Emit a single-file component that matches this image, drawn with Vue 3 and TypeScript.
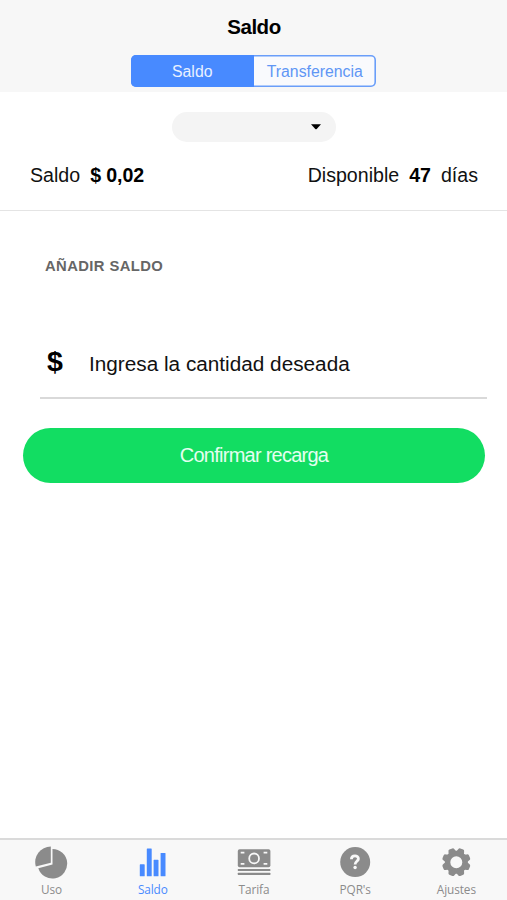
<script setup lang="ts">
import { ref } from 'vue'

type TabId = 'uso' | 'saldo' | 'tarifa' | 'pqrs' | 'ajustes'

interface Tab {
  id: TabId
  label: string
}

const segments: string[] = ['Saldo', 'Transferencia']
const activeSegment = ref<string>('Saldo')

const tabs: Tab[] = [
  { id: 'uso', label: 'Uso' },
  { id: 'saldo', label: 'Saldo' },
  { id: 'tarifa', label: 'Tarifa' },
  { id: 'pqrs', label: "PQR's" },
  { id: 'ajustes', label: 'Ajustes' },
]
const activeTab = ref<TabId>('saldo')

const toothAngles: number[] = [22.5, 67.5, 112.5, 157.5, 202.5, 247.5, 292.5, 337.5]
</script>

<template>
  <div class="screen">
    <header class="header">
      <h1 class="title">Saldo</h1>
      <div class="segmented">
        <button
          v-for="name in segments"
          :key="name"
          type="button"
          class="segment"
          :class="{ active: name === activeSegment }"
          @click="activeSegment = name"
        >{{ name }}</button>
      </div>
    </header>

    <main class="content">
      <div class="picker">
        <svg width="10" height="6" viewBox="0 0 10 6"><path d="M0 .2H10L5.7 4.9Q5 5.6 4.3 4.9Z" fill="#000" /></svg>
      </div>

      <section class="summary">
        <div class="pair"><span>Saldo</span><strong class="amount">$ 0,02</strong></div>
        <div class="pair"><span>Disponible</span><strong>47</strong><span>días</span></div>
      </section>

      <section class="recharge">
        <h2 class="caption">AÑADIR SALDO</h2>
        <div class="field">
          <span class="currency">$</span>
          <span class="placeholder">Ingresa la cantidad deseada</span>
        </div>
        <button type="button" class="confirm">Confirmar recarga</button>
      </section>
    </main>

    <nav class="tabs">
      <button
        v-for="tab in tabs"
        :key="tab.id"
        type="button"
        class="tab"
        :class="{ active: tab.id === activeTab }"
        @click="activeTab = tab.id"
      >
        <svg class="icon" width="34" height="34" viewBox="0 0 34 34" fill="currentColor">
          <template v-if="tab.id === 'uso'">
            <path d="M17.5 2.9A14.8 14.8 0 1 1 3.3 22.2L17.5 18.4Z" />
            <path d="M15.8.5V16.7L.8 20.4A15.6 15.6 0 0 1 15.8.5Z" />
          </template>
          <template v-else-if="tab.id === 'saldo'">
            <rect x="3.8" y="18.3" width="4.9" height="12" rx=".6" />
            <rect x="10.8" y="2.5" width="4.9" height="27.8" rx=".6" />
            <rect x="17.6" y="13.8" width="4.9" height="16.5" rx=".6" />
            <rect x="24.6" y="7" width="4.9" height="23.3" rx=".6" />
          </template>
          <template v-else-if="tab.id === 'tarifa'">
            <rect x=".8" y="3.3" width="32.6" height="18" rx="1.8" />
            <g fill="none" stroke="#f8f8f8" stroke-width="1.8">
              <circle cx="17.1" cy="12.4" r="4.9" />
              <path d="M3.7 6.7h3.7M26.6 6.7h3.7M3.7 17.8h3.7M26.6 17.8h3.7" />
            </g>
            <rect x=".8" y="23" width="32.6" height="2.1" rx=".5" />
            <rect x=".8" y="26.8" width="32.6" height="2.1" rx=".5" />
          </template>
          <template v-else-if="tab.id === 'pqrs'">
            <circle cx="17.2" cy="16.1" r="15" />
            <path d="M13.4 13.3C13.4 8.8 20.6 9.1 20.4 12.8C20.3 15.2 17.1 15.3 17.1 18.4" fill="none" stroke="#f8f8f8" stroke-width="2.8" />
            <circle cx="17.1" cy="21.5" r="1.7" fill="#f8f8f8" />
          </template>
          <template v-else>
            <circle cx="17.3" cy="16.2" r="8.7" fill="none" stroke="currentColor" stroke-width="5.4" />
            <path
              v-for="angle in toothAngles"
              :key="angle"
              d="M12 7.2Q13.6 6 14.1 3.5Q14.4 2 15.7 1.9H18.9Q20.2 2 20.5 3.5Q21 6 22.6 7.2Z"
              :transform="`rotate(${angle} 17.3 16.2)`"
            />
          </template>
        </svg>
        <span class="label">{{ tab.label }}</span>
      </button>
    </nav>
  </div>
</template>

<style>
body {
  margin: 0;
  background: #fff;
}
</style>

<style scoped>
.screen {
  display: flex;
  flex-direction: column;
  height: 900px;
  background: #fff;
  color: #111;
  font-family: 'Liberation Sans', Arial, sans-serif;
}

button {
  margin: 0;
  padding: 0;
  border: 0;
  background: none;
  font-family: inherit;
}

.header {
  display: flex;
  flex-direction: column;
  align-items: center;
  box-sizing: border-box;
  height: 92px;
  padding: 15px 0 0 1px;
  background: #f7f7f7;
}

.title {
  margin: 0;
  color: #000;
  font-size: 20.5px;
  font-weight: 700;
  line-height: 24px;
  letter-spacing: -0.45px;
}

.segmented {
  display: flex;
  box-sizing: border-box;
  width: 245px;
  height: 32px;
  margin: 15.5px 1px 0 0;
  overflow: hidden;
  border-radius: 5px;
  background: #f9fafd;
  box-shadow: inset 0 0 0 1.6px #6a9ef9;
}

.segment {
  flex: 1;
  color: #6096f5;
  font-size: 15.8px;
  line-height: 33px;
}

.segment.active {
  background: #488aff;
  color: #e9f1ff;
}

.content {
  display: flex;
  flex: 1;
  flex-direction: column;
}

.picker {
  display: flex;
  align-items: center;
  align-self: center;
  justify-content: flex-end;
  box-sizing: border-box;
  width: 164px;
  height: 30px;
  margin-top: 20px;
  padding-right: 15px;
  border-radius: 15px;
  background: #f4f4f4;
}

.summary {
  display: flex;
  justify-content: space-between;
  box-sizing: border-box;
  height: 69px;
  padding: 21px 29px 0 30px;
  border-bottom: 1.5px solid #e4e4e4;
  font-size: 19.6px;
  line-height: 24px;
}

.pair {
  display: flex;
  gap: 10px;
}

.pair strong {
  color: #000;
}

.amount {
  letter-spacing: -0.1px;
}

.recharge {
  display: flex;
  flex-direction: column;
}

.caption {
  margin: 45px 0 0 45px;
  color: #666;
  font-size: 14.8px;
  font-weight: 700;
  line-height: 20px;
  letter-spacing: 0.4px;
}

.field {
  display: flex;
  align-items: flex-start;
  box-sizing: border-box;
  height: 54px;
  margin: 69px 20px 0 40px;
  padding-left: 7px;
  border-bottom: 2px solid #d9d9d9;
}

.currency {
  width: 42px;
  color: #000;
  font-size: 28.5px;
  font-weight: 700;
  line-height: 32px;
}

.placeholder {
  padding-top: 7px;
  font-size: 20.75px;
  line-height: 24px;
}

.confirm {
  height: 55px;
  margin: 29px 22px 0 23px;
  border-radius: 27.5px;
  background: #12dd62;
  color: #e4fff0;
  font-size: 20px;
  line-height: 52px;
  letter-spacing: -0.75px;
  padding-bottom: 2px;
}

.tabs {
  display: grid;
  grid-template-columns: repeat(5, 1fr);
  box-sizing: border-box;
  height: 62px;
  padding-left: 1px;
  border-top: 2px solid #dadada;
  background: #f8f8f8;
}

.tab {
  display: flex;
  flex-direction: column;
  align-items: center;
  padding-top: 5.5px;
  color: #8b8b8b;
}

.tab.active {
  color: #488aff;
}

.icon {
  display: block;
}

.label {
  margin-top: 1px;
  font-family: 'Open Sans', 'Noto Sans', sans-serif;
  font-size: 11.8px;
  line-height: 16px;
  letter-spacing: -0.1px;
}
</style>
